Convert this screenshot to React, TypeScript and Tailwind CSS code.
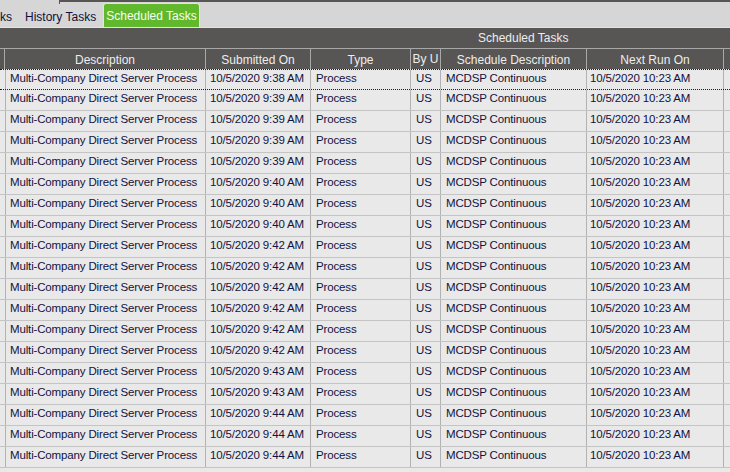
import React from "react";

const rows: string[] = [
  "9:38", "9:39", "9:39", "9:39", "9:39", "9:40", "9:40", "9:40", "9:42", "9:42",
  "9:42", "9:42", "9:42", "9:42", "9:43", "9:43", "9:44", "9:44", "9:44",
];

const cols = "grid grid-cols-[5px_201px_105px_100px_30px_146px_137px_1fr]";

function HeaderCell({ label, top }: { label?: string; top?: boolean }) {
  return (
    <div
      className={
        "border-r border-[#a8a8a8] flex justify-center text-[#ededed] whitespace-nowrap " +
        (top ? "items-start pt-[1px]" : "items-center pt-[1px]")
      }
    >
      {label}
    </div>
  );
}

function Cell({ children, pad = "pl-[5px]" }: { children?: React.ReactNode; pad?: string }) {
  return (
    <div
      className={
        "border-r border-[#b2b2b2] whitespace-nowrap overflow-hidden leading-[17px] text-[11.5px] tracking-[-0.15px] " +
        pad
      }
    >
      {children}
    </div>
  );
}

export default function App() {
  return (
    <div
      className="w-[730px] h-[472px] overflow-hidden bg-[#e9e9e9] text-[12px] select-none"
      style={{ fontFamily: '"Liberation Sans", Arial, sans-serif' }}
    >
      {/* tab strip */}
      <div className="h-[28px] bg-[#d6d6d6] relative flex items-end border-b border-[#e4e4dc]">
        <div className="absolute top-0 left-[60px] right-0 h-[2px] bg-[#585654]" />
        <div className="absolute top-0 left-[59px] w-[1px] h-[4px] bg-[#585654]" />
        <span className="absolute left-0 top-[8px] text-[#10103a]">ks</span>
        <span className="absolute left-[25px] top-[8px] text-[#10103a]">History Tasks</span>
        <div className="absolute left-[103px] top-[3px] w-[97px] h-[24px] bg-[#62b82c] border border-[#d8f0c8] border-b-0 rounded-t-[3px] flex items-start justify-center pt-[3px] text-[#f4fff0]">
          Scheduled Tasks
        </div>
      </div>

      {/* group header */}
      <div className="h-[20px] bg-[#585654] flex items-center text-[#ededed] pl-[478px]">
        Scheduled Tasks
      </div>

      {/* column header */}
      <div className={cols + " h-[21px] bg-[#585654] border-t border-[#a8a8a8]"}>
        <HeaderCell />
        <HeaderCell label="Description" />
        <HeaderCell label="Submitted On" />
        <HeaderCell label="Type" />
        <HeaderCell label="By U" top />
        <HeaderCell label="Schedule Description" />
        <HeaderCell label="Next Run On" />
        <div />
      </div>

      {/* rows */}
      <div className="text-[#12123e]">
        {rows.map((t, i) => (
          <div
            key={i}
            className={
              cols +
              " h-[21px] bg-[#e9e9e9] " +
              (i === 0
                ? "border-y border-dotted border-[#202020]"
                : "border-b border-[#c4c4c4]")
            }
          >
            <Cell />
            <Cell>Multi-Company Direct Server Process</Cell>
            <Cell pad="pl-[4px]">{`10/5/2020 ${t} AM`}</Cell>
            <Cell>Process</Cell>
            <Cell>US</Cell>
            <Cell>MCDSP Continuous</Cell>
            <Cell pad="pl-[3px]">10/5/2020 10:23 AM</Cell>
            <div />
          </div>
        ))}
      </div>
    </div>
  );
}
